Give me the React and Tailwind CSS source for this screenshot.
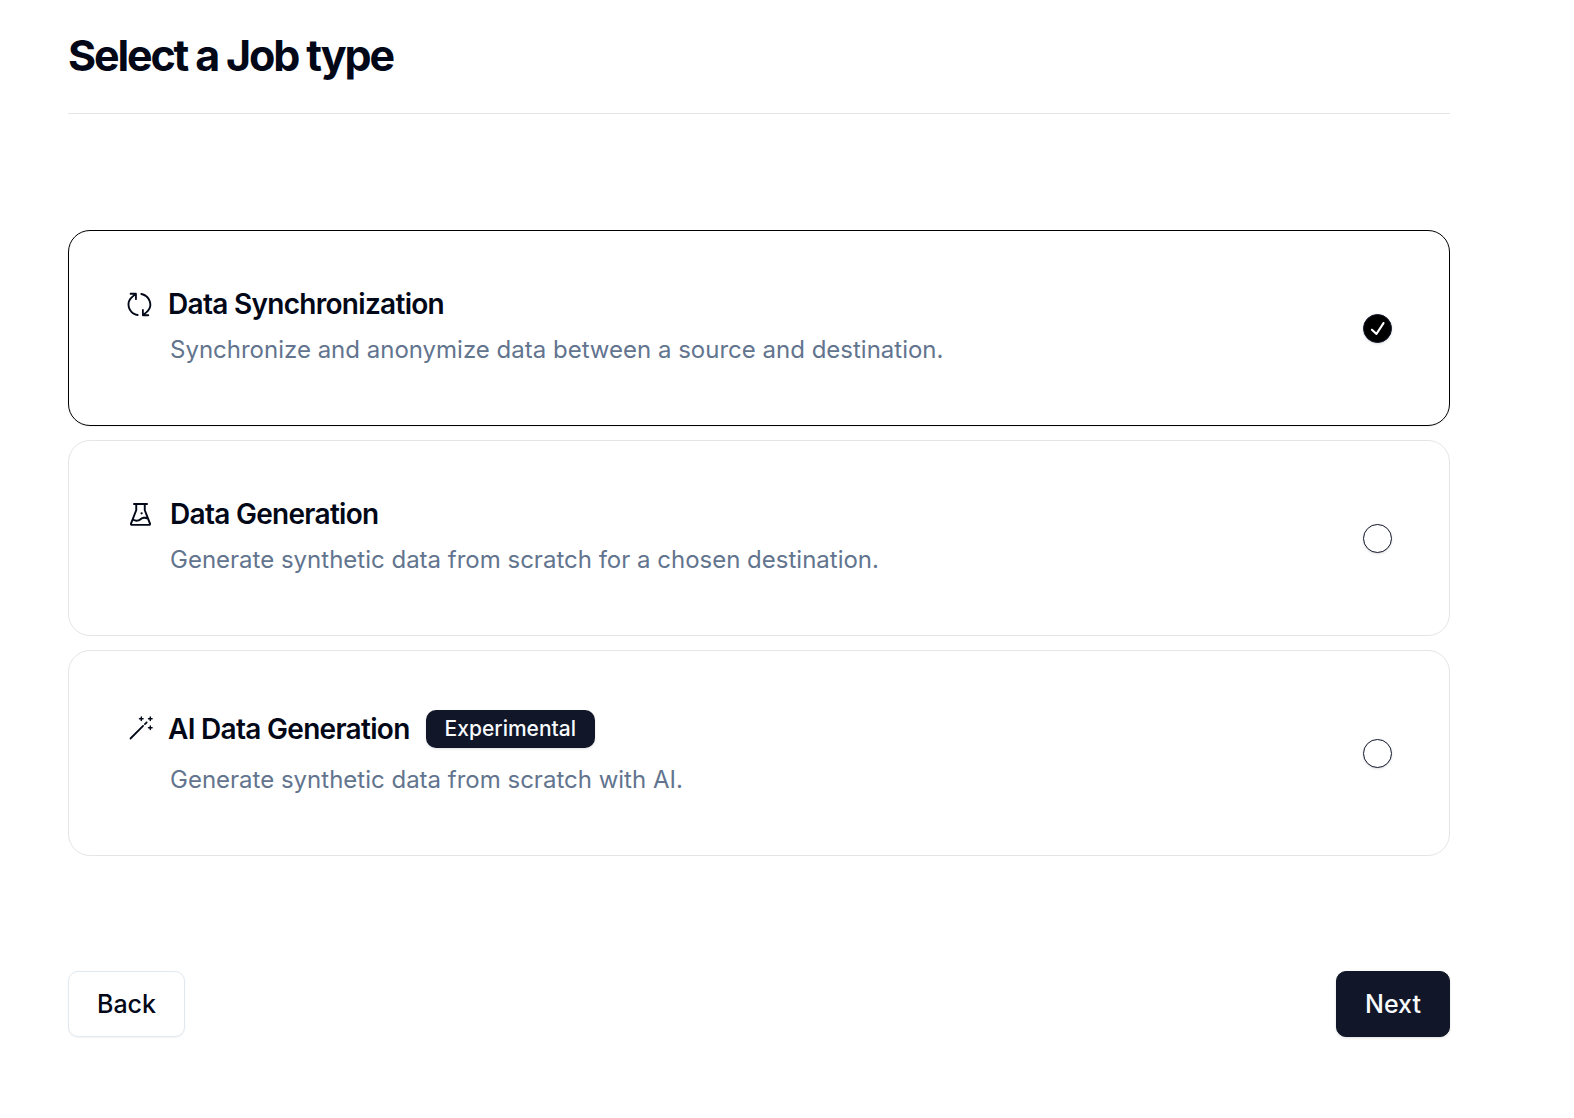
import { useState } from 'react'
import { AiOutlineExperiment } from 'react-icons/ai'
import { RxCheck, RxMagicWand, RxSymbol } from 'react-icons/rx'

const jobTypes = [
  {
    id: 'data-sync',
    name: 'Data Synchronization',
    description: 'Synchronize and anonymize data between a source and destination.',
    icon: RxSymbol,
    iconSize: 27,
  },
  {
    id: 'generate-table',
    name: 'Data Generation',
    description: 'Generate synthetic data from scratch for a chosen destination.',
    icon: AiOutlineExperiment,
    iconSize: 29,
  },
  {
    id: 'ai-generate-table',
    name: 'AI Data Generation',
    description: 'Generate synthetic data from scratch with AI.',
    icon: RxMagicWand,
    iconSize: 27,
    experimental: true,
  },
]

const JobTypeCard = ({ job, selected, onSelect }) => {
  const Icon = job.icon

  return (
    <label
      htmlFor={job.id}
      className={`flex items-center justify-between rounded-[22px] border bg-white p-[57px] cursor-pointer ${
        selected ? 'border-black shadow-xs' : 'border-[#e5e5e5]'
      }`}
    >
      <div>
        <div className="flex items-center">
          <Icon size={job.iconSize} className="mr-[15px] shrink-0" />
          <h2 className="text-[28px] leading-8 font-semibold tracking-tight">{job.name}</h2>
          {job.experimental && (
            <span className="my-0.5 ml-4 rounded-[10px] bg-[#111629] px-[19px] py-1 text-[21px] leading-[30px] font-medium text-slate-50 shadow-sm">
              Experimental
            </span>
          )}
        </div>
        <p className="mt-3 pl-11 text-[24px] leading-9 text-slate-500">{job.description}</p>
      </div>
      <span className="grid size-[29px] shrink-0 place-items-center">
        <input
          type="radio"
          id={job.id}
          name="job-type"
          checked={selected}
          onChange={() => onSelect(job.id)}
          className="col-start-1 row-start-1 size-[29px] appearance-none rounded-full border border-[#111629] bg-white shadow-sm checked:bg-black"
        />
        {selected && (
          <RxCheck size={25} className="pointer-events-none z-10 col-start-1 row-start-1 text-white" />
        )}
      </span>
    </label>
  )
}

const App = () => {
  const [selected, setSelected] = useState('data-sync')

  return (
    <main className="min-h-screen bg-white pt-[31px] pr-[124px] pb-20 pl-[68px] font-['Inter','Liberation_Sans',sans-serif] text-[#020817]">
      <header className="border-b border-[#e5e5e5] pb-[33px]">
        <h1 className="text-[43px] leading-[49px] font-bold tracking-tighter">Select a Job type</h1>
      </header>
      <form onSubmit={(e) => e.preventDefault()}>
        <div className="mt-[116px] flex flex-col gap-[14px]">
          {jobTypes.map((job) => (
            <JobTypeCard key={job.id} job={job} selected={selected === job.id} onSelect={setSelected} />
          ))}
        </div>
        <div className="mt-[115px] flex justify-between">
          <button
            type="button"
            className="rounded-[10px] border border-slate-200 bg-white px-7 py-[14px] text-[25px] leading-9 font-medium shadow-xs"
          >
            Back
          </button>
          <button
            type="submit"
            className="rounded-[10px] border border-[#111629] bg-[#111629] px-7 py-[14px] text-[25px] leading-9 font-medium text-slate-50 shadow-sm"
          >
            Next
          </button>
        </div>
      </form>
    </main>
  )
}

export default App
